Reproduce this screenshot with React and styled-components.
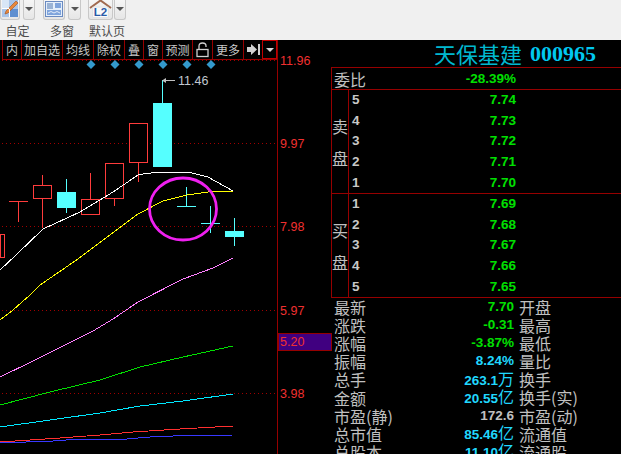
import React from "react";
import styled, { createGlobalStyle } from "styled-components";

const CJK = `"Noto Sans CJK SC", "Liberation Sans", sans-serif`;
const LINE = "#960000";

const GlobalStyle = createGlobalStyle`
  html, body {
    margin: 0;
    background: #000;
  }
`;

const Page = styled.div`
  width: 621px;
  height: 454px;
  overflow: hidden;
  display: flex;
  flex-direction: column;
  background: #000;
  font-family: ${CJK};
`;

const TopBar = styled.div`
  height: 40px;
  flex: none;
  background: #f0f0f0;
  display: flex;
  align-items: flex-start;
`;

const ToolGroup = styled.div`
  width: ${(p) => p.$width}px;
  margin-left: ${(p) => p.$left}px;
  display: flex;
  flex-direction: column;
`;

const ToolIcons = styled.div`
  height: 20px;
  display: flex;
  justify-content: space-between;
`;

const IconButton = styled.div`
  width: ${(p) => p.$width}px;
  height: 20px;
  box-sizing: border-box;
  border: 1px solid #c8c8c8;
  border-top: none;
  border-radius: 0 0 3px 3px;
  background: linear-gradient(#f6f6f6, #e6e6e6);
  display: flex;
  align-items: flex-end;
  justify-content: center;
  overflow: hidden;
`;

const DropButton = styled(IconButton)`
  align-items: center;
  &::after {
    content: "";
    border-left: 4px solid transparent;
    border-right: 4px solid transparent;
    border-top: 4px solid #555;
    margin-bottom: 2px;
  }
`;

const ToolLabel = styled.div`
  font-size: 12px;
  line-height: 16px;
  margin-top: 3px;
  color: #4c4c4c;
  text-align: center;
  white-space: nowrap;
`;

const Body = styled.div`
  flex: 1;
  min-height: 0;
  display: flex;
`;

const ChartColumn = styled.div`
  width: 331px;
  flex: none;
  display: flex;
  flex-direction: column;
`;

const ChartTools = styled.div`
  width: 276px;
  height: 20px;
  flex: none;
  box-sizing: border-box;
  margin-left: 2px;
  border-bottom: 1px solid ${LINE};
  border-right: 1px solid ${LINE};
  display: flex;
`;

const ChartTool = styled.div`
  width: ${(p) => p.$width}px;
  flex: none;
  box-sizing: border-box;
  border-left: 1px solid ${LINE};
  color: #c8c8c8;
  font-size: 12px;
  line-height: 19px;
  text-align: center;
  white-space: nowrap;
  display: flex;
  align-items: center;
  justify-content: center;
`;

const MenuTool = styled(ChartTool)`
  border: 1px solid #c00000;
  &::after {
    content: "";
    border-left: 4px solid transparent;
    border-right: 4px solid transparent;
    border-top: 4px solid #d8d8d8;
  }
`;

const Chart = styled.svg`
  display: block;
  width: 331px;
  height: 394px;
  flex: none;
  overflow: visible;
`;

const AxisText = styled.text`
  font-family: "Liberation Sans", sans-serif;
  font-size: 12.5px;
  fill: ${(p) => p.$color || "#f03030"};
  dominant-baseline: central;
`;

const QuotePanel = styled.div`
  flex: 1;
  min-width: 0;
  display: flex;
  flex-direction: column;
`;

const Title = styled.div`
  height: 27px;
  flex: none;
  box-sizing: border-box;
  padding-left: 103px;
  display: flex;
  align-items: center;
  gap: 8px;
  font-size: 22px;
  line-height: 27px;
  font-family: "Liberation Serif", "Noto Sans CJK SC", serif;
  white-space: nowrap;
`;

const TitleName = styled.span`
  font-family: ${CJK};
  color: #00b8d0;
`;

const TitleCode = styled.span`
  font-weight: 700;
  color: #00c8f0;
`;

const Book = styled.div`
  flex: none;
  border-top: 1px solid ${LINE};
  border-left: 1px solid ${LINE};
`;

const RatioRow = styled.div`
  width: 184px;
  height: 21px;
  box-sizing: border-box;
  padding-left: 2px;
  display: flex;
  align-items: center;
  justify-content: space-between;
  color: #c0c0c0;
  font-size: 16px;
`;

const Side = styled.div`
  height: 103px;
  border-top: 1px solid ${LINE};
  display: grid;
  grid-template-columns: 17px 1fr;
`;

const SideName = styled.div`
  border-right: 1px solid ${LINE};
  color: #c0c0c0;
  font-size: 16px;
  line-height: 16px;
  display: flex;
  flex-direction: column;
  align-items: center;
  justify-content: center;
  gap: 16px;
`;

const Levels = styled.div`
  display: grid;
  grid-auto-rows: 1fr;
`;

const Level = styled.div`
  width: 167px;
  display: flex;
  align-items: center;
  justify-content: space-between;
  padding-left: 3px;
  box-sizing: border-box;
`;

const Num = styled.span`
  font-family: "Liberation Sans", sans-serif;
  font-size: 13.5px;
  font-weight: 700;
  line-height: 16px;
  color: ${(p) => p.$color || "#00e000"};
  white-space: nowrap;
`;

const Unit = styled.span`
  font-family: ${CJK};
  font-size: 16px;
  font-weight: 400;
  line-height: 16px;
`;

const Stats = styled.div`
  border-top: 1px solid ${LINE};
  padding-left: 3px;
  display: grid;
  grid-template-columns: 180px 1fr;
  grid-auto-rows: 18.1px;
`;

const StatRow = styled.div`
  display: contents;
`;

const StatLeft = styled.div`
  display: flex;
  align-items: center;
  justify-content: space-between;
`;

const StatName = styled.span`
  color: #c0c0c0;
  font-size: 16px;
  line-height: 18px;
  white-space: nowrap;
  padding-left: ${(p) => p.$pad || 0}px;
`;

const candles = [
  { x: 0, w: 4, top: 234, bottom: 257, up: true },
  { x: 9, w: 19, top: 201, bottom: 201, hi: 201, lo: 222, up: true },
  { x: 33.5, w: 18, top: 185.5, bottom: 198.5, hi: 175, lo: 228, up: true },
  { x: 57, w: 19, top: 192, bottom: 208, hi: 179, lo: 213 },
  { x: 81.5, w: 18, top: 199.5, bottom: 214.5, hi: 173, lo: 199, up: true },
  { x: 105.5, w: 18, top: 163.5, bottom: 198.5, hi: 163, lo: 206, up: true },
  { x: 129.5, w: 18, top: 123.5, bottom: 162.5, hi: 123, lo: 182, up: true },
  { x: 153, w: 19, top: 103, bottom: 167, hi: 80, lo: 103 },
  { x: 177, w: 19, top: 206, bottom: 207, hi: 187, lo: 207 },
  { x: 201, w: 19, top: 223, bottom: 224, hi: 206, lo: 233 },
  { x: 225, w: 19, top: 231, bottom: 237, hi: 218, lo: 246 },
];

const averages = [
  { color: "#ffffff", points: "0,270 16,255 43,229 80,212 113,192 138,175 143,174 160,172 188,172 208,177 233,191" },
  { color: "#ffff00", points: "0,320 13,310 30,295 40,285 78,259 138,214 163,201 187,195 208,192 233,191" },
  { color: "#ff80ff", points: "0,377 33,361 93,331 113,319 138,302 183,279 213,268 233,258" },
  { color: "#00e000", points: "0,405 50,392 100,380 140,367 183,357 233,346" },
  { color: "#00e8ff", points: "0,427 50,420 100,413 140,406 183,401 233,394" },
  { color: "#ff3030", points: "0,442 30,440 60,438 100,435 133,432 180,429 233,426" },
  { color: "#3838ff", points: "0,443 53,441 80,439 127,439 150,437 173,436 233,435" },
];

const gridLines = [60.5, 143.5, 226.5, 310.5, 393.5];
const axisLabels = [
  { y: 61, text: "11.96" },
  { y: 143.5, text: "9.97" },
  { y: 227, text: "7.98" },
  { y: 310.5, text: "5.97" },
  { y: 342, text: "5.20" },
  { y: 394, text: "3.98" },
];
const markers = [91, 115, 139, 163, 187, 211];

const tools = [
  { w: 19, text: "内" },
  { w: 41, text: "加自选" },
  { w: 31, text: "均线" },
  { w: 31, text: "除权" },
  { w: 19, text: "叠" },
  { w: 19, text: "窗" },
  { w: 30, text: "预测" },
  { w: 20, lock: true },
  { w: 31, text: "更多" },
  { w: 19, arrow: true },
];

const sell = ["7.74", "7.73", "7.72", "7.71", "7.70"];
const buy = ["7.69", "7.68", "7.67", "7.66", "7.65"];

const stats = [
  { name: "最新", value: "7.70", other: "开盘", color: "#00e000" },
  { name: "涨跌", value: "-0.31", other: "最高", color: "#00e000" },
  { name: "涨幅", value: "-3.87%", other: "最低", color: "#00e000" },
  { name: "振幅", value: "8.24%", other: "量比", color: "#20d8ff" },
  { name: "总手", value: "263.1", unit: "万", other: "换手", color: "#20d8ff" },
  { name: "金额", value: "20.55", unit: "亿", other: "换手(实)", color: "#20d8ff" },
  { name: "市盈(静)", value: "172.6", other: "市盈(动)", color: "#c0c0c0" },
  { name: "总市值", value: "85.46", unit: "亿", other: "流通值", color: "#20d8ff" },
  { name: "总股本", value: "11.10", unit: "亿", other: "流通股", color: "#20d8ff" },
];

const PencilIcon = () => (
  <svg width="18" height="19" viewBox="0 0 18 19">
    <rect x="1" y="0" width="16" height="17" fill="#a8c4e8" />
    <rect x="1" y="0" width="7" height="8" fill="#d8e6f6" />
    <rect x="9" y="9" width="8" height="8" fill="#5f8fd0" />
    <path d="M15 1 L17 3 L7 13 L4 14 L5 11 Z" fill="#e8883a" stroke="#a05020" strokeWidth="0.6" />
    <path d="M1 8.5 H8 M8.5 9 V17" stroke="#fff" strokeWidth="1" />
  </svg>
);

const PanesIcon = () => (
  <svg width="18" height="18" viewBox="0 0 18 18">
    <rect x="0.5" y="0.5" width="17" height="15" fill="#e4eefa" stroke="#6a8ac0" />
    <path d="M2 3 H8 M2 5 H8 M2 7 H8" stroke="#5078b0" strokeWidth="1" />
    <rect x="10" y="2" width="6" height="5" fill="#7fa4dc" />
    <rect x="2" y="9" width="14" height="5" fill="#7fa4dc" />
    <path d="M3 12 L6 10.5 L9 12 L12 10.5 L15 12" stroke="#fff" strokeWidth="0.8" fill="none" />
  </svg>
);

const HomeIcon = () => (
  <svg width="24" height="20" viewBox="0 0 24 20">
    <path d="M1 9 L12 1 L23 9" fill="none" stroke="#a06a50" strokeWidth="2" />
    <rect x="4" y="8" width="16" height="11" fill="#fafafa" stroke="#d8d8d8" strokeWidth="0.6" />
    <text x="12" y="17.5" textAnchor="middle" fontFamily="Liberation Sans, sans-serif" fontWeight="700" fontSize="12" fill="#2a5aa8">
      L2
    </text>
  </svg>
);

const LockIcon = () => (
  <svg width="13" height="16" viewBox="0 0 13 16">
    <path d="M3 7 V4 Q3 1 6.5 1 Q10 1 10 4 V5" fill="none" stroke="#d0d0d0" strokeWidth="1.3" />
    <rect x="1" y="7.5" width="11" height="7" fill="none" stroke="#d0d0d0" strokeWidth="1.3" />
  </svg>
);

const ArrowBarIcon = () => (
  <svg width="13" height="11" viewBox="0 0 13 11">
    <path d="M0 3 H4 V0 L10 5.5 L4 11 V8 H0 Z M11 0 H13 V11 H11 Z" fill="#d0d0d0" />
  </svg>
);

const Candle = ({ c }) => {
  const color = c.up ? "#ff3c3c" : "#55ffff";
  const mid = c.x + c.w / 2;
  const flat = c.bottom - c.top < 2;
  return (
    <g shapeRendering="crispEdges">
      {c.hi !== undefined && <line x1={mid} x2={mid} y1={c.hi} y2={c.lo} stroke={color} />}
      {flat ? (
        <line x1={c.x} x2={c.x + c.w} y1={c.top + 0.5} y2={c.top + 0.5} stroke={color} />
      ) : (
        <rect
          x={c.x}
          y={c.top}
          width={c.w}
          height={c.bottom - c.top}
          fill={c.up ? "#000" : color}
          stroke={c.up ? color : "none"}
        />
      )}
    </g>
  );
};

const KLineChart = () => (
  <Chart viewBox="0 60 331 394">
    {gridLines.map((y) => (
      <line key={y} x1="2" x2="277" y1={y} y2={y} stroke="#a00000" strokeDasharray="1 3" shapeRendering="crispEdges" />
    ))}
    {markers.map((x) => (
      <path key={x} d={`M${x} 60 L${x + 4.5} 64.5 L${x} 69 L${x - 4.5} 64.5 Z`} fill="#3399cc" />
    ))}
    {candles.map((c) => (
      <Candle key={c.x} c={c} />
    ))}
    {averages.map((a) => (
      <polyline key={a.color} points={a.points} fill="none" stroke={a.color} strokeWidth="1" shapeRendering="crispEdges" />
    ))}
    <ellipse cx="183" cy="209" rx="33.5" ry="31" fill="none" stroke="#f020f0" strokeWidth="2.8" />
    <path d="M175 80.5 H165" stroke="#c0c0c0" />
    <path d="M162 80.5 L166 78 V83 Z" fill="#c0c0c0" />
    <AxisText x="178" y="81" $color="#c0c8d0">11.46</AxisText>
    <line x1="277.5" x2="277.5" y1="60" y2="454" stroke={LINE} shapeRendering="crispEdges" />
    <rect x="278" y="333.5" width="53" height="17" fill="#400080" stroke={LINE} shapeRendering="crispEdges" />
    {axisLabels.map((l) => (
      <AxisText key={l.text} x="280" y={l.y}>
        {l.text}
      </AxisText>
    ))}
  </Chart>
);

const BookSide = ({ names, prices, order }) => (
  <Side>
    <SideName>
      <span>{names[0]}</span>
      <span>{names[1]}</span>
    </SideName>
    <Levels>
      {prices.map((price, index) => (
        <Level key={price}>
          <Num $color="#c8c8c8">{order[index]}</Num>
          <Num>{price}</Num>
        </Level>
      ))}
    </Levels>
  </Side>
);

const App = () => (
  <Page>
    <GlobalStyle />
    <TopBar>
      <ToolGroup $width={35} $left={0}>
        <ToolIcons>
          <IconButton $width={20}>
            <PencilIcon />
          </IconButton>
          <DropButton $width={12} />
        </ToolIcons>
        <ToolLabel>自定</ToolLabel>
      </ToolGroup>
      <ToolGroup $width={38} $left={8}>
        <ToolIcons>
          <IconButton $width={22}>
            <PanesIcon />
          </IconButton>
          <DropButton $width={13} />
        </ToolIcons>
        <ToolLabel>多窗</ToolLabel>
      </ToolGroup>
      <ToolGroup $width={38} $left={7}>
        <ToolIcons>
          <IconButton $width={25}>
            <HomeIcon />
          </IconButton>
          <DropButton $width={12} />
        </ToolIcons>
        <ToolLabel>默认页</ToolLabel>
      </ToolGroup>
    </TopBar>
    <Body>
      <ChartColumn>
        <ChartTools>
          {tools.map((tool, index) => (
            <ChartTool key={index} $width={tool.w}>
              {tool.text}
              {tool.lock && <LockIcon />}
              {tool.arrow && <ArrowBarIcon />}
            </ChartTool>
          ))}
          <MenuTool $width={15} />
        </ChartTools>
        <KLineChart />
      </ChartColumn>
      <QuotePanel>
        <Title>
          <TitleName>天保基建</TitleName>
          <TitleCode>000965</TitleCode>
        </Title>
        <Book>
          <RatioRow>
            <span>委比</span>
            <Num>-28.39%</Num>
          </RatioRow>
          <BookSide names={["卖", "盘"]} prices={sell} order={[5, 4, 3, 2, 1]} />
          <BookSide names={["买", "盘"]} prices={buy} order={[1, 2, 3, 4, 5]} />
        </Book>
        <Stats>
          {stats.map((row) => (
            <StatRow key={row.name}>
              <StatLeft>
                <StatName>{row.name}</StatName>
                <Num $color={row.color}>
                  {row.value}
                  {row.unit && <Unit>{row.unit}</Unit>}
                </Num>
              </StatLeft>
              <StatName $pad={5}>{row.other}</StatName>
            </StatRow>
          ))}
        </Stats>
      </QuotePanel>
    </Body>
  </Page>
);

export default App;
